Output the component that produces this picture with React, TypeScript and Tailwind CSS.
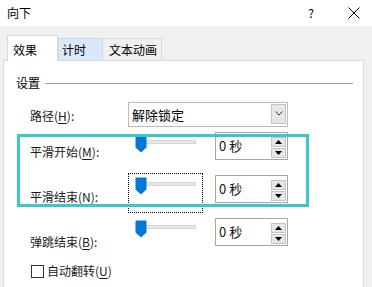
import React from "react";

const font = { fontFamily: '"Noto Sans CJK SC", "Noto Sans", sans-serif' };

function Thumb() {
  return (
    <svg width="12" height="18" viewBox="0 0 12 18" className="absolute left-[7px] top-0">
      <path d="M1 0.5 H11 A0.5 0.5 0 0 1 11.5 1 V12.5 L6 17.5 L0.5 12.5 V1 A0.5 0.5 0 0 1 1 0.5 Z" fill="#0078d7" />
    </svg>
  );
}

function Slider({ focus }: { focus?: boolean }) {
  return (
    <div
      className={
        "relative w-[75px] " +
        (focus ? "h-[40px] border border-dotted border-black" : "h-[18px]")
      }
    >
      <div className={"relative " + (focus ? "mt-[3px] -ml-px" : "")}>
        <div className="absolute left-[10px] top-[5px] w-[58px] h-[4px] bg-[#e7e7e7] border border-[#d6d6d6]" />
        <Thumb />
      </div>
    </div>
  );
}

function Spin() {
  return (
    <div className="relative w-[73px] h-[28px] border border-[#a8a8a8] bg-white flex items-start">
      <span className="ml-[3px] mt-[4px] text-[13px] leading-[17px] text-[#111]">0 秒</span>
      <div className="absolute right-[1px] top-[4px] flex flex-col gap-px">
        <div className="w-[15px] h-[10px] bg-[#e6e6e6] border border-[#c4c4c4] flex items-center justify-center">
          <svg width="7" height="4" viewBox="0 0 7 4"><path d="M0 4 L3.5 0 L7 4 Z" fill="#000" /></svg>
        </div>
        <div className="w-[15px] h-[10px] bg-[#e6e6e6] border border-[#c4c4c4] flex items-center justify-center">
          <svg width="7" height="4" viewBox="0 0 7 4"><path d="M0 0 L3.5 4 L7 0 Z" fill="#000" /></svg>
        </div>
      </div>
    </div>
  );
}

function Label({ text, k }: { text: string; k: string }) {
  return (
    <span className="text-[12px] leading-[16px] text-[#1a1a1a]">
      {text}(<span className="underline underline-offset-2">{k}</span>):
    </span>
  );
}

export default function App() {
  return (
    <div className="relative w-[372px] h-[287px] overflow-hidden bg-[#f0f0f0]" style={font}>
      {/* title bar */}
      <div className="h-[26px] bg-white flex items-center pl-[7px] pr-[12px]">
        <span className="text-[12px] leading-[16px] text-black">向下</span>
        <span className="ml-auto mr-[34px] text-[12px] leading-[16px] text-black">?</span>
        <svg width="12" height="12" viewBox="0 0 12 12" className="mb-px">
          <path d="M0.5 0.5 L11.5 11.5 M11.5 0.5 L0.5 11.5" stroke="#000" strokeWidth="1" />
        </svg>
      </div>

      {/* tabs */}
      <div className="h-[34px] flex items-end pl-[7px]">
        <div className="relative z-10 -mb-px h-[26px] w-[51px] bg-white border border-b-0 border-[#d9d9d9] pl-[5px] pt-[6px] text-[12px] leading-[16px] text-black">
          效果
        </div>
        <div className="h-[22px] w-[45px] bg-[#d8eaf9] border border-b-0 border-[#c5ddf2] pl-[3px] pt-[3px] text-[12px] leading-[16px] text-black">
          计时
        </div>
        <div className="h-[22px] w-[59px] bg-[#f0f0f0] border border-b-0 border-l-0 border-[#d9d9d9] pl-[6px] pt-[3px] text-[12px] leading-[16px] text-black">
          文本动画
        </div>
      </div>

      {/* panel */}
      <div className="ml-[3px] w-[361px] h-[240px] bg-white border border-[#d9d9d9]">
        <div className="pt-[14px] pl-[12px] flex items-center pr-[10px]">
          <span className="text-[12px] leading-[16px] text-black">设置</span>
          <div className="ml-[5px] flex-1 h-px bg-[#a0a0a0]" />
        </div>

        <div className="mt-[10px] pl-[26px] h-[26px] flex items-center">
          <div className="w-[98px]"><Label text="路径" k="H" /></div>
          <div className="relative w-[160px] h-[25px] border border-[#bcbcbc] bg-white flex items-center">
            <span className="ml-[3px] text-[13px] leading-[17px] text-black">解除锁定</span>
            <div className="absolute right-[1px] top-[1px] w-[15px] h-[20px] bg-[#e6e6e6] border border-[#c4c4c4] flex items-center justify-center">
              <svg width="8" height="5" viewBox="0 0 8 5"><path d="M0.5 0.5 L4 4 L7.5 0.5" stroke="#333" strokeWidth="1" fill="none" /></svg>
            </div>
          </div>
        </div>

        <div className="mt-[5px] pl-[26px] h-[28px] flex items-start">
          <div className="w-[98px] mt-[6px]"><Label text="平滑开始" k="M" /></div>
          <div className="mt-[3px]"><Slider /></div>
          <div className="ml-[12px]"><Spin /></div>
        </div>

        <div className="mt-[13px] pl-[26px] h-[40px] flex items-start">
          <div className="w-[98px] mt-[10px]"><Label text="平滑结束" k="N" /></div>
          <Slider focus />
          <div className="ml-[12px] mt-[2px]"><Spin /></div>
        </div>

        <div className="mt-[5px] pl-[26px] h-[29px] flex items-start">
          <div className="w-[98px] mt-[10px]"><Label text="弹跳结束" k="B" /></div>
          <div className="mt-[2px]"><Slider /></div>
          <div className="ml-[12px]"><Spin /></div>
        </div>

        <div className="mt-[16px] pl-[27px] flex items-center h-[16px]">
          <div className="w-[13px] h-[13px] border border-[#333] bg-white" />
          <span className="ml-[3px] text-[12px] leading-[16px] text-[#1a1a1a]">
            自动翻转(<span className="underline underline-offset-2">U</span>)
          </span>
        </div>
      </div>

      {/* highlight annotation */}
      <div className="absolute left-[17px] top-[134px] w-[292px] h-[73px] border-[3px] border-[#3cc8c8] pointer-events-none" />
    </div>
  );
}
